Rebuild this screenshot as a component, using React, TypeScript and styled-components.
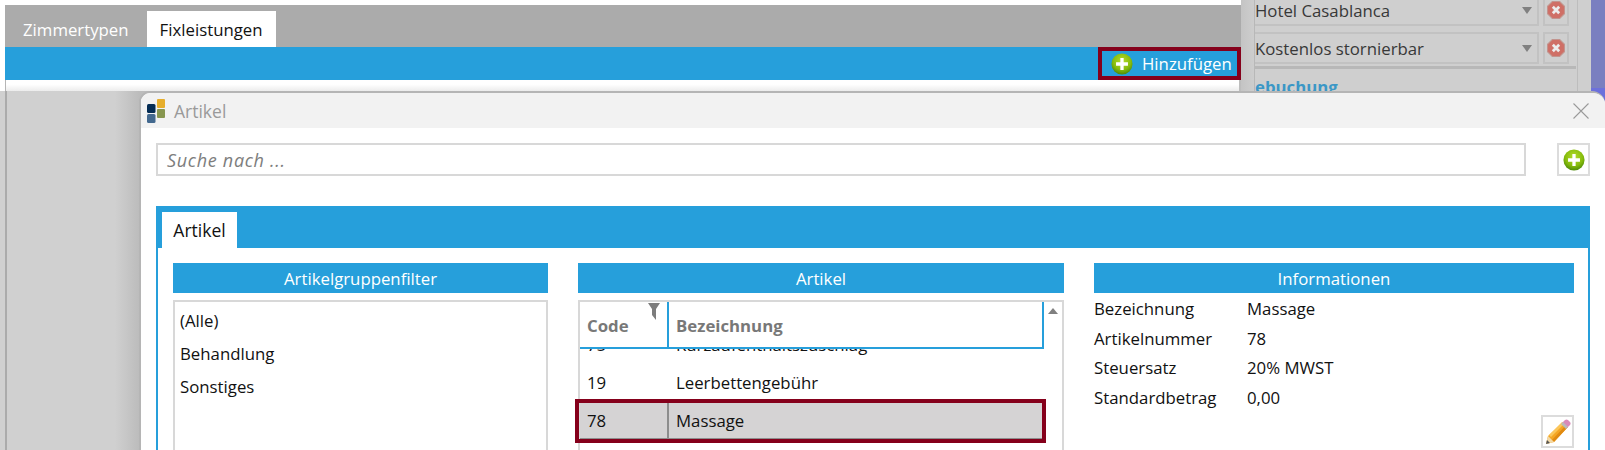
import React from "react";
import styled, { createGlobalStyle } from "styled-components";

const blue = "#269fdb";
const mark = "#85001b";

const GlobalStyle = createGlobalStyle`
  html, body {
    margin: 0;
    padding: 0;
    background: #fff;
    overflow: hidden;
  }
  body {
    font-family: "Open Sans", "Noto Sans", "Liberation Sans", sans-serif;
    font-size: 16.8px;
    color: #111;
  }
  * {
    box-sizing: border-box;
  }
`;

// background window

const Page = styled.div`
  position: relative;
  width: 1605px;
  height: 450px;
  overflow: hidden;
  display: grid;
  grid-template-columns: 1241px 350px 14px;
`;

const Main = styled.div`
  display: flex;
  flex-direction: column;
`;

const Head = styled.div`
  padding: 5px 0 0 5px;
  height: 91px;
  display: flex;
  flex-direction: column;
`;

const TabBar = styled.div`
  height: 42px;
  background: #ababab;
  padding: 6px 0 0 5px;
  display: flex;
`;

const TopTab = styled.div<{ $active?: boolean }>`
  height: 36px;
  padding: 0 13px;
  margin-right: ${(p) => (p.$active ? 0 : 5)}px;
  display: flex;
  align-items: center;
  background: ${(p) => (p.$active ? "#fff" : "transparent")};
  color: ${(p) => (p.$active ? "#111" : "#fff")};
`;

const ActionBar = styled.div`
  height: 33px;
  background: ${blue};
  display: flex;
  justify-content: flex-end;
  align-items: center;
`;

const AddAction = styled.div`
  position: relative;
  width: 135px;
  height: 25px;
  margin-right: 4px;
  padding-left: 9px;
  display: flex;
  align-items: center;
  gap: 9px;
  white-space: nowrap;
  color: #fff;
  &::after {
    content: "";
    position: absolute;
    inset: -4px -4px -4px -4px;
    border: 4px solid ${mark};
  }
`;

const Strip = styled.div`
  flex: 1;
  border-left: 1px solid #b5b5b5;
  border-right: 2px solid #bdbdbd;
  background: linear-gradient(#fff 40%, #ececec);
`;

const Backdrop = styled.div`
  flex: 1;
  padding-left: 5px;
  background: linear-gradient(90deg, #d0d0d0 115px, #bcbcbc 139px);
`;

const BackdropLine = styled.div`
  height: 100%;
  width: 2px;
  background: #ababab;
`;

const SidePanel = styled.div`
  padding: 0 13px 0 13px;
  background: linear-gradient(90deg, #c4c4c4, #cfcfcf 15px);
  color: #383838;
`;

const SideInner = styled.div`
  height: 91px;
  overflow: hidden;
  border-left: 1px solid #b8b8b8;
  border-right: 1px solid #bdbdbd;
`;

const SideRow = styled.div`
  display: flex;
  height: 32px;
  margin-bottom: 6px;
  gap: 4px;
  &:first-child {
    margin-top: -6px;
  }
`;

const Combo = styled.div`
  width: 284px;
  display: flex;
  align-items: center;
  justify-content: space-between;
  border: 2px solid #c2c2c2;
  border-left: 0;
  padding-right: 5px;
`;

const ComboArrow = styled.span`
  width: 0;
  height: 0;
  border-left: 5px solid transparent;
  border-right: 5px solid transparent;
  border-top: 7px solid #808080;
`;

const RemoveBox = styled.div`
  width: 26px;
  border: 2px solid #c2c2c2;
  display: flex;
  align-items: center;
  justify-content: center;
`;

const SideRule = styled.div`
  height: 3px;
  width: 321px;
  background: #b8b8b8;
  margin-top: -4px;
`;

const SideTitle = styled.div`
  font-weight: 700;
  color: #3b97c6;
  margin-top: 6px;
  line-height: 24px;
`;

const Purple = styled.div`
  background: linear-gradient(#7a7fc0 88px, #6c70dc 88px);
`;

// dialog

const Dialog = styled.div`
  position: absolute;
  left: 139px;
  top: 91px;
  right: 0;
  height: 370px;
  background: #fff;
  border: 2px solid #b5b5b5;
  border-right: 0;
  border-radius: 11px 13px 0 0;
  overflow: hidden;
`;

const TitleBar = styled.div`
  height: 35px;
  background: #f2f2f2;
  display: flex;
  align-items: center;
  padding: 0 16px 0 6px;
  color: #9a9a9a;
  font-size: 17.5px;
`;

const DialogTitle = styled.span`
  margin-left: 9px;
  flex: 1;
`;

const DialogBody = styled.div`
  padding: 15px 15px 0;
`;

const SearchRow = styled.div`
  display: flex;
  gap: 31px;
  margin-bottom: 30px;
`;

const SearchBox = styled.div`
  flex: 1;
  height: 33px;
  border: 2px solid #d8d8d8;
  padding-left: 9px;
  display: flex;
  align-items: center;
  font-style: italic;
  font-size: 18px;
  letter-spacing: 0.7px;
  color: #7d7d7d;
`;

const IconButton = styled.div`
  width: 33px;
  height: 33px;
  border: 2px solid #dcdcdc;
  display: flex;
  align-items: center;
  justify-content: center;
`;

const Panel = styled.div`
  border-left: 2px solid ${blue};
  border-right: 2px solid ${blue};
`;

const PanelBand = styled.div`
  height: 42px;
  background: ${blue};
  padding: 6px 0 0 4px;
  display: flex;
`;

const PanelTab = styled.div`
  width: 75px;
  height: 36px;
  background: #fff;
  display: flex;
  align-items: center;
  justify-content: center;
  font-size: 17.5px;
`;

const Columns = styled.div`
  display: grid;
  grid-template-columns: 375px 486px 480px;
  column-gap: 30px;
  padding: 15px 0 0 15px;
`;

const ColumnHead = styled.div`
  height: 30px;
  background: ${blue};
  color: #fff;
  display: flex;
  align-items: center;
  justify-content: center;
`;

const ListBox = styled.div`
  margin-top: 7px;
  height: 170px;
  border: 2px solid #d8d8d8;
  padding: 2px 0 0 5px;
`;

const ListItem = styled.div`
  height: 33px;
  display: flex;
  align-items: center;
`;

const DataGrid = styled.div`
  margin-top: 7px;
  height: 170px;
  border: 2px solid #d8d8d8;
  border-bottom: 0;
  display: flex;
`;

const Table = styled.div`
  width: 464px;
`;

const Scroller = styled.div`
  flex: 1;
  display: flex;
  justify-content: center;
  padding-top: 6px;
`;

const ScrollUp = styled.span`
  width: 0;
  height: 0;
  border-left: 5px solid transparent;
  border-right: 5px solid transparent;
  border-bottom: 6px solid #808080;
`;

const HeadRow = styled.div`
  position: relative;
  z-index: 1;
  height: 47px;
  background: #fff;
  display: flex;
  border-bottom: 2px solid ${blue};
  border-right: 2px solid ${blue};
`;

const HeadCell = styled.div<{ $width?: number }>`
  position: relative;
  width: ${(p) => (p.$width ? `${p.$width}px` : "auto")};
  flex: ${(p) => (p.$width ? "none" : 1)};
  padding: 12px 0 0 7px;
  font-weight: 700;
  color: #787878;
  border-right: ${(p) => (p.$width ? `2px solid ${blue}` : "0")};
`;

const FilterMark = styled.svg`
  position: absolute;
  left: 68px;
  top: 1px;
`;

const Body = styled.div`
  margin-top: -24px;
`;

const Row = styled.div<{ $selected?: boolean }>`
  position: relative;
  height: ${(p) => (p.$selected ? 39 : 38)}px;
  display: flex;
  align-items: center;
  background: ${(p) => (p.$selected ? "#d5d3d4" : "transparent")};
  ${(p) =>
    p.$selected &&
    `box-shadow: inset 0 -2px 0 #8d8d8d;
    &::after {
      content: "";
      position: absolute;
      inset: -2px -2px -3px -5px;
      border: 4px solid ${mark};
    }`}
`;

const Cell = styled.div<{ $width?: number; $selected?: boolean }>`
  width: ${(p) => (p.$width ? `${p.$width}px` : "auto")};
  flex: ${(p) => (p.$width ? "none" : 1)};
  height: 100%;
  display: flex;
  align-items: center;
  padding-left: 7px;
  border-right: ${(p) => (p.$selected && p.$width ? "2px solid #8d8d8d" : "0")};
`;

const InfoGrid = styled.div`
  display: grid;
  grid-template-columns: 153px 1fr;
  grid-auto-rows: 29.6px;
  align-items: center;
  margin-top: 1px;
`;

const InfoFoot = styled.div`
  display: flex;
  justify-content: flex-end;
  margin-top: 3px;
`;

function PlusIcon({ id, size }: { id: string; size: number }) {
  return (
    <svg width={size} height={size} viewBox="0 0 24 24">
      <defs>
        <radialGradient id={id} cx="50%" cy="35%" r="65%">
          <stop offset="0%" stopColor="#b5dc2c" />
          <stop offset="65%" stopColor="#86bc0c" />
          <stop offset="100%" stopColor="#4d8a08" />
        </radialGradient>
      </defs>
      <circle cx="12" cy="12" r="11.5" fill={`url(#${id})`} />
      <path d="M12 5.5v13M5.5 12h13" stroke="#fff" strokeWidth="3.6" />
    </svg>
  );
}

function RemoveIcon() {
  return (
    <svg width="18" height="18" viewBox="0 0 17 17">
      <path
        d="M5 .5h7L16.5 5v7L12 16.5H5L.5 12V5z"
        fill="#cf6f66"
        stroke="#c2948e"
      />
      <path d="M5.5 5.5l6 6M11.5 5.5l-6 6" stroke="#ececec" strokeWidth="2.6" />
    </svg>
  );
}

function Logo() {
  return (
    <svg width="18" height="24" viewBox="0 0 18 24">
      <rect x="10" y="0" width="8" height="9" rx="1" fill="#e6ae2c" />
      <rect x="10" y="10" width="8" height="9" rx="1" fill="#87964f" />
      <rect x="0" y="5" width="8.5" height="9" rx="1.5" fill="#042c54" />
      <rect x="0" y="15" width="8.5" height="9" rx="1.5" fill="#43698f" />
    </svg>
  );
}

function CloseIcon() {
  return (
    <svg width="16" height="16" viewBox="0 0 16 16">
      <path d="M.5.5l15 15M15.5.5l-15 15" stroke="#9a9a9a" strokeWidth="1.1" />
    </svg>
  );
}

function PencilIcon() {
  return (
    <svg width="26" height="26" viewBox="0 0 26 26">
      <path d="M1 25l2-8L18 3l5 5L9 23z" fill="#f5a623" />
      <path d="M4 16L17 3l2 2L6 18z" fill="#fbc65a" />
      <path d="M9 23L22 9l1-1-2-2L7 21z" fill="#e08a12" />
      <path d="M1 25l2-8 6 6z" fill="#f2d9a8" />
      <path d="M1 25l1-4 3 3z" fill="#555" />
      <path d="M17 4l3-3c1-.8 2-.8 3 0l2 2c.8 1 .8 2 0 3l-3 3z" fill="#d98ab8" />
      <path d="M16 5l2-2 5 5-2 2z" fill="#b9b9b9" />
    </svg>
  );
}

const info = [
  ["Bezeichnung", "Massage"],
  ["Artikelnummer", "78"],
  ["Steuersatz", "20% MWST"],
  ["Standardbetrag", "0,00"],
];

const rows = [
  { code: "75", name: "Kurzaufenthaltszuschlag" },
  { code: "19", name: "Leerbettengebühr" },
  { code: "78", name: "Massage", selected: true },
];

export default function App() {
  return (
    <>
      <GlobalStyle />
      <Page>
        <Main>
          <Head>
            <TabBar>
              <TopTab>Zimmertypen</TopTab>
              <TopTab $active>Fixleistungen</TopTab>
            </TabBar>
            <ActionBar>
              <AddAction>
                <PlusIcon id="plus-top" size={22} />
                Hinzufügen
              </AddAction>
            </ActionBar>
            <Strip />
          </Head>
          <Backdrop>
            <BackdropLine />
          </Backdrop>
        </Main>

        <SidePanel>
          <SideInner>
            <SideRow>
              <Combo>
                Hotel Casablanca
                <ComboArrow />
              </Combo>
              <RemoveBox>
                <RemoveIcon />
              </RemoveBox>
            </SideRow>
            <SideRow>
              <Combo>
                Kostenlos stornierbar
                <ComboArrow />
              </Combo>
              <RemoveBox>
                <RemoveIcon />
              </RemoveBox>
            </SideRow>
            <SideRule />
            <SideTitle>ebuchung</SideTitle>
          </SideInner>
        </SidePanel>
        <Purple />

        <Dialog>
          <TitleBar>
            <Logo />
            <DialogTitle>Artikel</DialogTitle>
            <CloseIcon />
          </TitleBar>
          <DialogBody>
            <SearchRow>
              <SearchBox>Suche nach ...</SearchBox>
              <IconButton>
                <PlusIcon id="plus-search" size={22} />
              </IconButton>
            </SearchRow>
            <Panel>
              <PanelBand>
                <PanelTab>Artikel</PanelTab>
              </PanelBand>
              <Columns>
                <div>
                  <ColumnHead>Artikelgruppenfilter</ColumnHead>
                  <ListBox>
                    <ListItem>(Alle)</ListItem>
                    <ListItem>Behandlung</ListItem>
                    <ListItem>Sonstiges</ListItem>
                  </ListBox>
                </div>
                <div>
                  <ColumnHead>Artikel</ColumnHead>
                  <DataGrid>
                    <Table>
                      <HeadRow>
                        <HeadCell $width={89}>
                          Code
                          <FilterMark width="12" height="17" viewBox="0 0 12 17">
                            <path d="M0 0h12L8 6v11L4 12V6z" fill="#7d7d7d" />
                          </FilterMark>
                        </HeadCell>
                        <HeadCell>Bezeichnung</HeadCell>
                      </HeadRow>
                      <Body>
                        {rows.map((r) => (
                          <Row key={r.code} $selected={r.selected}>
                            <Cell $width={89} $selected={r.selected}>
                              {r.code}
                            </Cell>
                            <Cell>{r.name}</Cell>
                          </Row>
                        ))}
                      </Body>
                    </Table>
                    <Scroller>
                      <ScrollUp />
                    </Scroller>
                  </DataGrid>
                </div>
                <div>
                  <ColumnHead>Informationen</ColumnHead>
                  <InfoGrid>
                    {info.map(([label, value]) => (
                      <React.Fragment key={label}>
                        <span>{label}</span>
                        <span>{value}</span>
                      </React.Fragment>
                    ))}
                  </InfoGrid>
                  <InfoFoot>
                    <IconButton>
                      <PencilIcon />
                    </IconButton>
                  </InfoFoot>
                </div>
              </Columns>
            </Panel>
          </DialogBody>
        </Dialog>
      </Page>
    </>
  );
}
